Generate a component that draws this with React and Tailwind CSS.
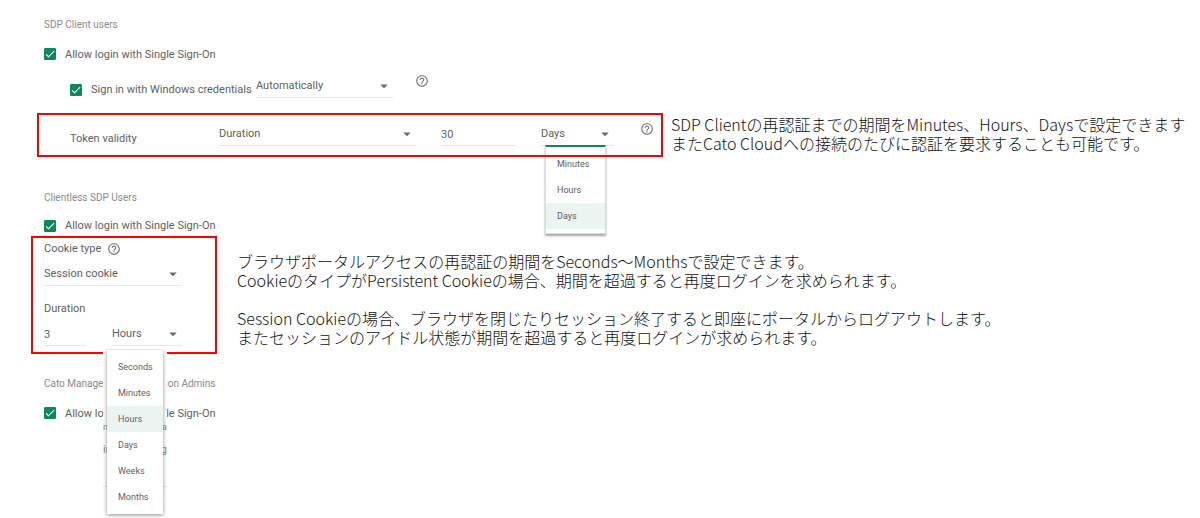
import React, { useState } from 'react';
import { MdArrowDropDown, MdCheck, MdHelpOutline } from 'react-icons/md';

const Checkbox = ({ label, className = '' }) => (
  <label className={`flex items-center gap-[9px] text-[11px] leading-4 text-[#616161] ${className}`}>
    <span className="grid h-3 w-3 place-items-center">
      <input
        type="checkbox"
        defaultChecked
        className="peer col-start-1 row-start-1 h-3 w-3 appearance-none rounded-[1px] border border-[#0d875c] checked:bg-[#0d875c]"
      />
      <MdCheck className="pointer-events-none invisible col-start-1 row-start-1 h-3 w-3 text-white peer-checked:visible" />
    </span>
    <span className="pt-px">{label}</span>
  </label>
);

const Select = ({ label, value, options, onChange, className }) => (
  <div className={`grid shrink-0 items-center ${className}`}>
    <select
      aria-label={label}
      value={value}
      onChange={(e) => onChange(e.target.value)}
      className="col-start-1 row-start-1 h-6 w-full appearance-none border-b border-[#e8e8e8] bg-transparent pt-[2px] text-[11px] text-[#616161] outline-none"
    >
      {options.map((option) => (
        <option key={option}>{option}</option>
      ))}
    </select>
    <MdArrowDropDown className="pointer-events-none col-start-1 row-start-1 h-[18px] w-[18px] justify-self-end text-[#6b6b6b]" />
  </div>
);

const NumberField = ({ label, defaultValue, className }) => (
  <input
    aria-label={label}
    defaultValue={defaultValue}
    className={`h-6 shrink-0 border-b border-[#e8e8e8] bg-transparent pt-[2px] text-[11px] text-[#616161] outline-none ${className}`}
  />
);

const Help = ({ className = '' }) => (
  <button type="button" aria-label="Help" className={className}>
    <MdHelpOutline className="h-[14px] w-[14px] text-[#757575]" />
  </button>
);

const Menu = ({ options, value, onSelect }) => (
  <ul>
    {options.map((option) => (
      <li key={option}>
        <button
          type="button"
          onClick={() => onSelect(option)}
          className={`block h-[26px] w-full pt-[2px] pl-[11px] text-left text-[9px] text-[#616161] ${option === value ? 'bg-[#ecf4f1]' : 'bg-white'}`}
        >
          {option}
        </button>
      </li>
    ))}
  </ul>
);

const SectionTitle = ({ children, className = '' }) => (
  <h2 className={`flex h-6 items-center pl-11 text-[10px] text-[#8a8a8a] ${className}`}>{children}</h2>
);

const Note = ({ children, className = '' }) => (
  <div
    className={`font-['Noto_Sans_CJK_JP',sans-serif] text-base leading-[19px] font-light whitespace-nowrap text-[#111] ${className}`}
  >
    {children}
  </div>
);

const tokenUnits = ['Minutes', 'Hours', 'Days'];
const cookieUnits = ['Seconds', 'Minutes', 'Hours', 'Days', 'Weeks', 'Months'];

const App = () => {
  const [signIn, setSignIn] = useState('Automatically');
  const [validity, setValidity] = useState('Duration');
  const [tokenUnit, setTokenUnit] = useState('Days');
  const [cookieType, setCookieType] = useState('Session cookie');
  const [cookieUnit, setCookieUnit] = useState('Hours');

  return (
    <main className="overflow-hidden bg-white pt-3 pb-[87px] font-['Roboto',sans-serif]">
      {/* SDP client users */}
      <SectionTitle>SDP Client users</SectionTitle>
      <Checkbox label="Allow login with Single Sign-On" className="h-9 pl-11" />
      <div className="flex h-[41px] items-start pl-[70px]">
        <Checkbox label="Sign in with Windows credentials" className="mt-[9px] w-[186px]" />
        <Select
          label="Sign in mode"
          value={signIn}
          options={['Automatically', 'Manually']}
          onChange={setSignIn}
          className="mt-[2px] w-[137px]"
        />
        <Help className="mt-[2px] ml-[22px]" />
      </div>

      <div className="flex items-center gap-2 pl-[37px]">
        <section className="relative flex h-11 w-[626px] shrink-0 items-start pt-[9px] pl-[33px]">
          <span className="mt-[9px] w-[149px] text-[11px] leading-4 text-[#616161]">Token validity</span>
          <Select
            label="Token validity"
            value={validity}
            options={['Duration', 'Always prompt']}
            onChange={setValidity}
            className="w-[197px]"
          />
          <NumberField label="Token duration" defaultValue="30" className="ml-[25px] w-[74px]" />
          <div className="relative ml-[26px]">
            <Select
              label="Token duration unit"
              value={tokenUnit}
              options={tokenUnits}
              onChange={setTokenUnit}
              className="w-[73px]"
            />
            <div className="absolute top-[23px] left-1 w-[61px] border border-[#dcdcdc] border-t-2 border-t-[#0d875c] bg-white py-1 shadow-[0_2px_2px_rgba(0,0,0,0.35)]">
              <Menu options={tokenUnits} value={tokenUnit} onSelect={setTokenUnit} />
            </div>
          </div>
          <Help className="ml-[26px]" />
          <span className="pointer-events-none absolute inset-0 border-2 border-[#f00]" />
        </section>
        <Note className="mb-[2px]">
          <p>SDP Clientの再認証までの期間をMinutes、Hours、Daysで設定できます</p>
          <p>またCato Cloudへの接続のたびに認証を要求することも可能です。</p>
        </Note>
      </div>

      {/* Clientless users */}
      <SectionTitle className="mt-7">Clientless SDP Users</SectionTitle>
      <Checkbox label="Allow login with Single Sign-On" className="mt-2 mb-[2px] pl-11" />
      <div className="flex items-start gap-5 pl-[31px]">
        <section className="relative h-[118px] w-[186px] shrink-0 border-2 border-[#f00] pt-[3px] pl-[11px] text-[11px] text-[#616161]">
          <div className="flex h-4 items-center gap-[6px]">
            <span>Cookie type</span>
            <Help />
          </div>
          <Select
            label="Cookie type"
            value={cookieType}
            options={['Session cookie', 'Persistent cookie']}
            onChange={setCookieType}
            className="mt-[5px] w-[138px]"
          />
          <div className="mt-[15px] h-4 leading-4">Duration</div>
          <div className="mt-[5px] flex gap-[26px]">
            <NumberField label="Cookie duration" defaultValue="3" className="w-[42px]" />
            <Select
              label="Cookie duration unit"
              value={cookieUnit}
              options={cookieUnits}
              onChange={setCookieUnit}
              className="w-[70px]"
            />
          </div>

          <div className="absolute top-[111px] left-[70px] z-10 h-[169px] w-16 overflow-hidden bg-white px-1 pt-px">
            <div className="absolute inset-x-0 top-[70px] flex justify-between text-[9px] leading-4 text-[#8a8a8a]">
              <span>ne</span>
              <span>a</span>
            </div>
            <div className="absolute inset-x-0 top-[93px] flex justify-between text-[11px] leading-4 text-[#8a8a8a]">
              <span>in</span>
              <span>g</span>
            </div>
            <div className="absolute inset-x-0 top-[137px] border-t border-[#e8e8e8]" />
            <div className="relative bg-white py-1 shadow-[0_1px_4px_rgba(0,0,0,0.45)]">
              <Menu options={cookieUnits} value={cookieUnit} onSelect={setCookieUnit} />
            </div>
          </div>
        </section>
        <Note className="mt-4">
          <p>ブラウザポータルアクセスの再認証の期間をSeconds～Monthsで設定できます。</p>
          <p>CookieのタイプがPersistent Cookieの場合、期間を超過すると再度ログインを求められます。</p>
          <p className="mt-[19px]">
            Session Cookieの場合、ブラウザを閉じたりセッション終了すると即座にポータルからログアウトします。
          </p>
          <p>またセッションのアイドル状態が期間を超過すると再度ログインが求められます。</p>
        </Note>
      </div>

      {/* Management application admins */}
      <SectionTitle className="mt-[17px]">Cato Management Application Admins</SectionTitle>
      <Checkbox label="Allow login with Single Sign-On" className="h-9 pl-11" />
    </main>
  );
};

export default App;
